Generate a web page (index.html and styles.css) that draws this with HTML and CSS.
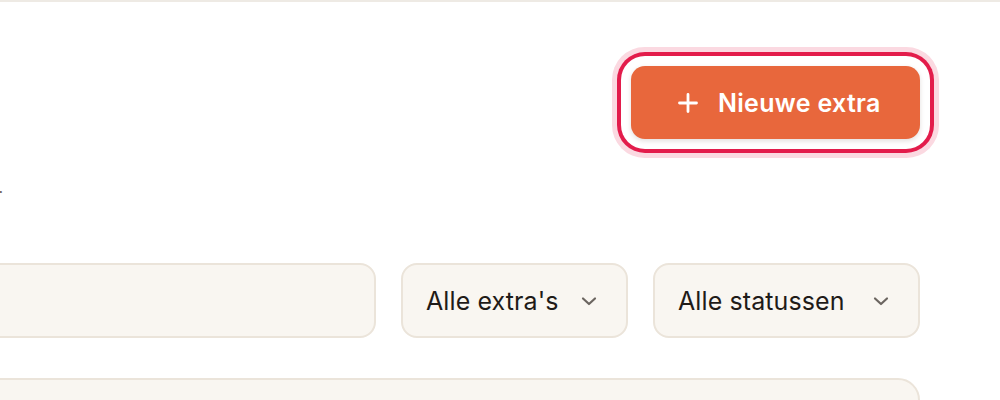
FILE: index.html
```html
<!DOCTYPE html>
<html lang="nl">
<head>
<meta charset="utf-8">
<title>Extra's</title>
<link rel="stylesheet" href="styles.css">
</head>
<body>
<div class="top-rule"></div>
<main class="page">
  <header class="header">
    <div class="intro">
      <div class="intro-inner">
        <h1 class="title">Extra's</h1>
        <p class="subtitle">Beheer de extra's die gasten aan hun boeking kunnen toevoegen.</p>
      </div>
    </div>
    <button class="btn-primary" type="button">
      <svg class="btn-icon" width="20" height="20" viewBox="0 0 20 20" aria-hidden="true">
        <path d="M10 1.5v17M1.5 10h17" fill="none" stroke="currentColor" stroke-width="2.8" stroke-linecap="round"/>
      </svg>
      <span>Nieuwe extra</span>
    </button>
  </header>

  <section class="filters">
    <div class="search"></div>
    <div class="select select-extras">
      <span>Alle extra's</span>
      <svg class="chev" width="16" height="16" viewBox="0 0 16 16" aria-hidden="true"><path d="M2 5.5L8 11l6-5.5" fill="none" stroke="currentColor" stroke-width="2.2" stroke-linecap="round" stroke-linejoin="round"/></svg>
    </div>
    <div class="select select-status">
      <span>Alle statussen</span>
      <svg class="chev" width="16" height="16" viewBox="0 0 16 16" aria-hidden="true"><path d="M2 5.5L8 11l6-5.5" fill="none" stroke="currentColor" stroke-width="2.2" stroke-linecap="round" stroke-linejoin="round"/></svg>
    </div>
  </section>

  <section class="list"></section>
</main>
</body>
</html>
```

FILE: styles.css
```css
* { box-sizing: border-box; }

html, body {
  margin: 0;
  padding: 0;
  background: #ffffff;
  overflow: hidden;
}

body {
  font-family: Inter, "Liberation Sans", sans-serif;
  color: #1f1b18;
  width: 1000px;
  height: 400px;
}

.top-rule {
  height: 2px;
  background: #eeeae4;
}

.page {
  margin-left: -300px;
  padding: 64px 80px 0 0;
  display: flex;
  flex-direction: column;
}

.header {
  display: flex;
  justify-content: space-between;
  align-items: flex-start;
}

.intro {
  flex: 0 0 303px;
  min-width: 0;
  display: flex;
  justify-content: flex-end;
  padding-top: 61px;
}

.intro-inner {
  flex: 0 0 auto;
  white-space: nowrap;
}

.title {
  margin: 0;
  font-size: 32px;
  line-height: 40px;
  font-weight: 700;
}

.subtitle {
  margin: 8px 0 0;
  font-size: 16px;
  line-height: 24px;
  color: #6b625a;
}

.btn-primary {
  flex: 0 0 auto;
  display: flex;
  align-items: center;
  gap: 20px;
  width: 289px;
  height: 73px;
  padding: 0 0 0 47px;
  border: 0;
  border-radius: 14px;
  background: #e8673c;
  color: #ffffff;
  font-family: inherit;
  font-size: 25px;
  font-weight: 560;
  letter-spacing: 0.3px;
  white-space: nowrap;
  box-shadow:
    0 2px 5px rgba(60, 30, 20, 0.14),
    0 0 0 10px #ffffff,
    0 0 0 14px #e31c4b,
    0 0 0 19px #fbd9e1;
}

.btn-icon { flex: 0 0 auto; }

.filters {
  margin-top: 64px;
  display: flex;
  gap: 25px;
}

.search,
.select {
  height: 75px;
  border: 2px solid #ebe4da;
  border-radius: 16px;
  background: #f9f6f1;
}

.search { flex: 1 1 auto; min-width: 0; }

.select {
  flex: 0 0 auto;
  display: flex;
  align-items: center;
  justify-content: space-between;
  padding: 0 29px 0 23px;
  font-size: 25px;
  letter-spacing: 0.1px;
  white-space: nowrap;
  color: #1f1b18;
}

.select-extras { width: 227px; }
.select-status { width: 267px; }

.chev { color: #6b6560; flex: 0 0 auto; }

.list {
  margin-top: 40px;
  height: 120px;
  border: 2px solid #ebe4da;
  border-radius: 22px;
  background: #f9f6f1;
}
```
